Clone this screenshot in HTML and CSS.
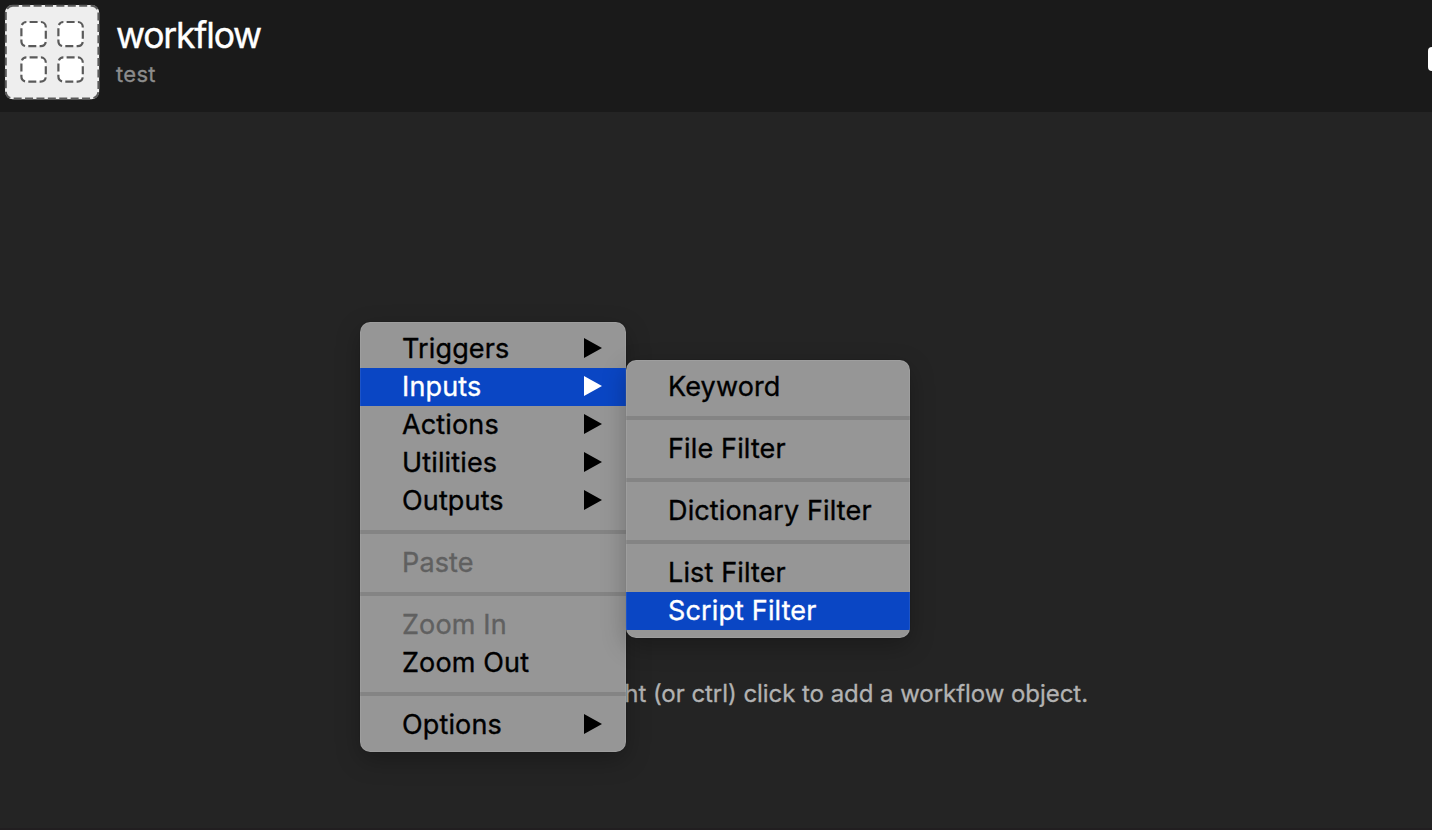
FILE: index.html
```html
<!DOCTYPE html>
<html lang="en">
<head>
<meta charset="utf-8">
<title>workflow</title>
<link rel="stylesheet" href="styles.css">
</head>
<body>
<div class="app">
  <header class="header">
    <svg class="logo" width="96" height="96" viewBox="4 4 96 96" fill="none">
      <rect x="5.8" y="5.8" width="92.6" height="92.6" rx="7" fill="#eee" stroke="#eee" stroke-width="1.5"/>
      <rect x="5.8" y="5.8" width="92.6" height="92.6" rx="7" stroke="#5c5c5c" stroke-width="2" stroke-dasharray="8 3.4" stroke-dashoffset="2"/>
      <g fill="#fff" stroke="#5a5a5a" stroke-width="2.2" stroke-dasharray="8 3.3" stroke-dashoffset="-3.2">
        <rect x="21.4" y="22" width="24.4" height="24.2" rx="5"/>
        <rect x="58.4" y="22" width="24.4" height="24.2" rx="5"/>
        <rect x="21.4" y="57.4" width="24.4" height="24.2" rx="5"/>
        <rect x="58.4" y="57.4" width="24.4" height="24.2" rx="5"/>
      </g>
    </svg>
    <div class="heading">
      <h1 class="title">workflow</h1>
      <p class="subtitle">test</p>
    </div>
    <div class="toggle"></div>
  </header>
  <main class="canvas">
    <p class="hint">Right (or ctrl) click to add a workflow object.</p>
  </main>
  <footer class="edge"></footer>

  <nav class="menu menu-main">
    <div class="item"><span>Triggers</span><svg class="arrow" viewBox="0 0 18 20"><path d="M0 0L18 10L0 20Z"/></svg></div>
    <div class="item active"><span>Inputs</span><svg class="arrow" viewBox="0 0 18 20"><path d="M0 0L18 10L0 20Z"/></svg></div>
    <div class="item"><span>Actions</span><svg class="arrow" viewBox="0 0 18 20"><path d="M0 0L18 10L0 20Z"/></svg></div>
    <div class="item"><span>Utilities</span><svg class="arrow" viewBox="0 0 18 20"><path d="M0 0L18 10L0 20Z"/></svg></div>
    <div class="item"><span>Outputs</span><svg class="arrow" viewBox="0 0 18 20"><path d="M0 0L18 10L0 20Z"/></svg></div>
    <div class="separator"></div>
    <div class="item disabled"><span>Paste</span></div>
    <div class="separator"></div>
    <div class="item disabled"><span>Zoom In</span></div>
    <div class="item"><span>Zoom Out</span></div>
    <div class="separator"></div>
    <div class="item"><span>Options</span><svg class="arrow" viewBox="0 0 18 20"><path d="M0 0L18 10L0 20Z"/></svg></div>
  </nav>

  <nav class="menu menu-sub">
    <div class="item"><span>Keyword</span></div>
    <div class="separator"></div>
    <div class="item"><span>File Filter</span></div>
    <div class="separator"></div>
    <div class="item"><span>Dictionary Filter</span></div>
    <div class="separator"></div>
    <div class="item"><span>List Filter</span></div>
    <div class="item active"><span>Script Filter</span></div>
  </nav>
</div>
</body>
</html>
```
FILE: styles.css
```css
* { box-sizing: border-box; }
body { margin: 0; font-family: Inter, "Liberation Sans", sans-serif; }
.app {
  position: relative;
  display: flex;
  flex-direction: column;
  width: 1432px;
  height: 830px;
  overflow: hidden;
  background: #242424;
}
.header {
  display: flex;
  align-items: flex-start;
  height: 112px;
  padding: 4px 0 0 4px;
  background: #1a1a1a;
}
.heading { margin-left: 16px; padding-top: 10px; }
.title {
  margin: 0;
  color: #fff;
  font-size: 35.5px;
  font-weight: 400;
  line-height: 44px;
  letter-spacing: -1.2px;
  -webkit-text-stroke: 0.4px currentColor;
}
.subtitle {
  margin: 2px 0 0;
  color: #8c8c8c;
  font-size: 22px;
  line-height: 28px;
  letter-spacing: 0.3px;
  -webkit-text-stroke: 0.3px currentColor;
}
.toggle {
  flex: none;
  width: 4px;
  height: 24px;
  margin: 43px 0 0 auto;
  border-radius: 4px 0 0 4px;
  background: #fff;
}
.canvas { flex: 1; padding: 566px 344px 0 0; }
.hint {
  margin: 0;
  color: #b2b2b2;
  font-size: 24px;
  line-height: 32px;
  letter-spacing: -0.05px;
  text-align: right;
  white-space: nowrap;
  -webkit-text-stroke: 0.3px currentColor;
}
.edge { height: 2px; background: #211e20; }
.menu {
  position: absolute;
  padding: 8px 0;
  border-radius: 10px;
  overflow: hidden;
  background: #969696;
  box-shadow: 0 0 1px rgba(0, 0, 0, 0.6), 0 8px 24px rgba(0, 0, 0, 0.26);
}
.menu::after {
  content: "";
  position: absolute;
  inset: 0;
  border-radius: inherit;
  box-shadow: inset 0 0 0 1px rgba(255, 255, 255, 0.08);
  pointer-events: none;
}
.menu-main { left: 360px; top: 322px; width: 266px; }
.menu-sub { left: 626px; top: 360px; width: 284px; }
.item {
  display: flex;
  align-items: center;
  justify-content: space-between;
  height: 38px;
  padding: 0 24px 0 42px;
  color: #000;
  font-size: 27px;
  line-height: 38px;
  letter-spacing: 0.14px;
  white-space: nowrap;
  -webkit-text-stroke: 0.35px currentColor;
}
.item.active { background: #0a46c4; color: #fff; }
.item.disabled { color: #606060; }
.arrow { width: 18px; height: 20px; margin-bottom: 2px; fill: currentColor; }
.separator { height: 24px; padding: 10px 0; background: #848484 content-box; }
```
